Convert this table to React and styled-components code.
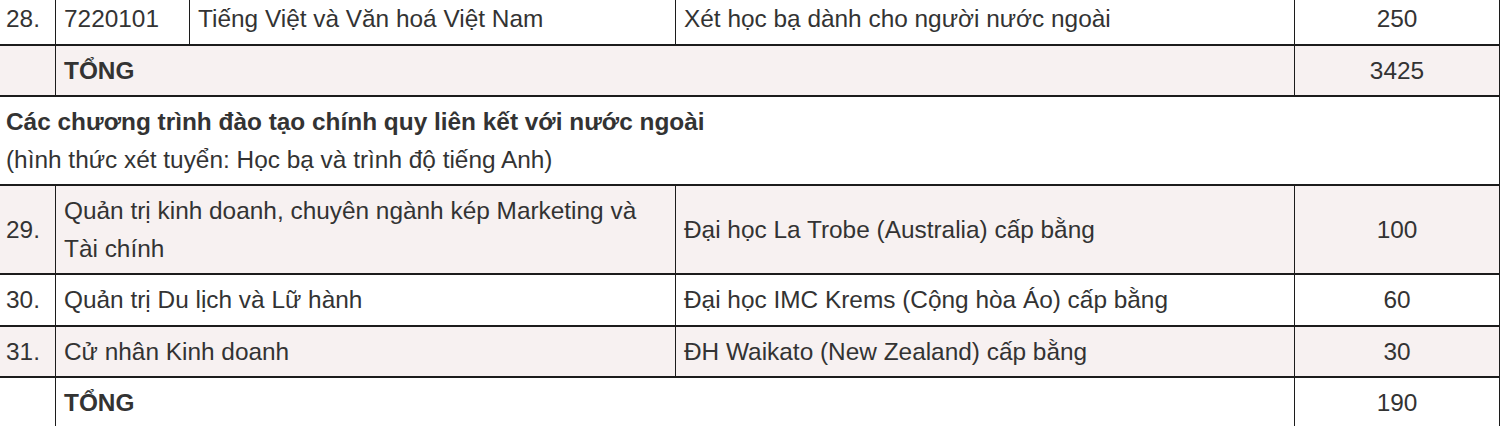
import React from 'react'
import styled, { createGlobalStyle } from 'styled-components'

const GlobalStyle = createGlobalStyle`
  body {
    margin: 0;
    background: #fff;
    overflow: hidden;
  }
`

const Table = styled.table`
  width: 1501px;
  margin: -8px 0 0 -2px;
  border-collapse: collapse;
  table-layout: fixed;
  font-family: "Liberation Sans", Arial, sans-serif;
  font-size: 24.4px;
  line-height: 37.5px;
  color: #333;
`

const Row = styled.tr`
  background: ${p => (p.shaded ? '#f7f1f1' : '#fff')};
`

const Cell = styled.td`
  border-top: 2px solid #1c1c1c;
  border-bottom: 2px solid #1c1c1c;
  border-left: 1px solid #1c1c1c;
  border-right: 1px solid #1c1c1c;
  padding: 6px 8px;
  vertical-align: middle;
  text-align: ${p => (p.center ? 'center' : 'left')};
  font-weight: ${p => (p.bold ? 700 : 400)};
`

const SectionCell = styled(Cell)`
  padding: 6px 7px;
`

const SectionTitle = styled.strong`
  display: block;
  font-weight: 700;
`

const rows = [
  { no: '29.', name: 'Quản trị kinh doanh, chuyên ngành kép Marketing và Tài chính', partner: 'Đại học La Trobe (Australia) cấp bằng', quota: 100 },
  { no: '30.', name: 'Quản trị Du lịch và Lữ hành', partner: 'Đại học IMC Krems (Cộng hòa Áo) cấp bằng', quota: 60 },
  { no: '31.', name: 'Cử nhân Kinh doanh', partner: 'ĐH Waikato (New Zealand) cấp bằng', quota: 30 },
]

export default function App() {
  return (
    <>
      <GlobalStyle />
      <Table>
        <colgroup>
          <col style={{ width: 57 }} />
          <col style={{ width: 134 }} />
          <col style={{ width: 486 }} />
          <col style={{ width: 619 }} />
          <col style={{ width: 205 }} />
        </colgroup>
        <tbody>
          <Row>
            <SectionCell>28.</SectionCell>
            <Cell>7220101</Cell>
            <Cell>Tiếng Việt và Văn hoá Việt Nam</Cell>
            <Cell>Xét học bạ dành cho người nước ngoài</Cell>
            <Cell center>250</Cell>
          </Row>
          <Row shaded>
            <Cell />
            <Cell colSpan={3} bold>TỔNG</Cell>
            <Cell center>3425</Cell>
          </Row>
          <Row>
            <SectionCell colSpan={5}>
              <SectionTitle>Các chương trình đào tạo chính quy liên kết với nước ngoài</SectionTitle>
              (hình thức xét tuyển: Học bạ và trình độ tiếng Anh)
            </SectionCell>
          </Row>
          {rows.map((r, i) => (
            <Row key={r.no} shaded={i % 2 === 0}>
              <SectionCell>{r.no}</SectionCell>
              <Cell colSpan={2}>{r.name}</Cell>
              <Cell>{r.partner}</Cell>
              <Cell center>{r.quota}</Cell>
            </Row>
          ))}
          <Row>
            <Cell />
            <Cell colSpan={3} bold>TỔNG</Cell>
            <Cell center>190</Cell>
          </Row>
        </tbody>
      </Table>
    </>
  )
}
